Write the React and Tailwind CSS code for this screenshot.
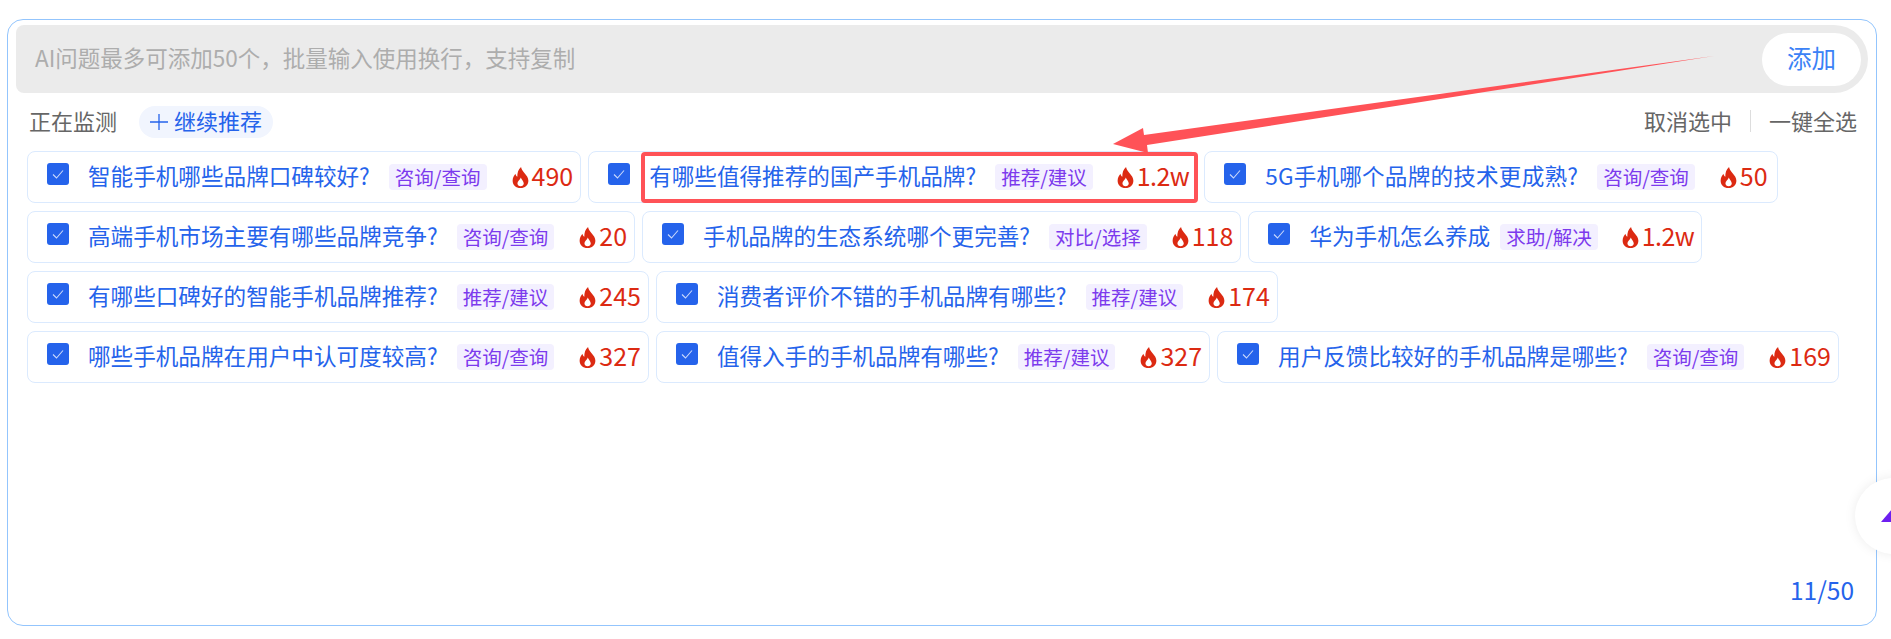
const rows = [
  [
    { text: '智能手机哪些品牌口碑较好?', tag: '咨询/查询', hot: '490' },
    { text: '有哪些值得推荐的国产手机品牌?', tag: '推荐/建议', hot: '1.2w' },
    { text: '5G手机哪个品牌的技术更成熟?', tag: '咨询/查询', hot: '50', wide: true },
  ],
  [
    { text: '高端手机市场主要有哪些品牌竞争?', tag: '咨询/查询', hot: '20' },
    { text: '手机品牌的生态系统哪个更完善?', tag: '对比/选择', hot: '118' },
    { text: '华为手机怎么养成', tag: '求助/解决', hot: '1.2w', noMark: true },
  ],
  [
    { text: '有哪些口碑好的智能手机品牌推荐?', tag: '推荐/建议', hot: '245' },
    { text: '消费者评价不错的手机品牌有哪些?', tag: '推荐/建议', hot: '174' },
  ],
  [
    { text: '哪些手机品牌在用户中认可度较高?', tag: '咨询/查询', hot: '327' },
    { text: '值得入手的手机品牌有哪些?', tag: '推荐/建议', hot: '327' },
    { text: '用户反馈比较好的手机品牌是哪些?', tag: '咨询/查询', hot: '169' },
  ],
]

function Flame() {
  return (
    <svg width="17" height="21" viewBox="0 0 15 20" className="shrink-0">
      <path
        fill="#dc2a12"
        fillRule="evenodd"
        d="M8 0c.6 2.800 2 4.300 3.600 6.200C13.400 8.300 15 10.300 15 13c0 4-3.200 7-7.500 7S0 17 0 13c0-2.700 1.300-4.700 2.700-6.500.2 1.300.8 2.200 1.800 2.800C4.300 5.500 5.400 2.300 8 0Zm-.3 10c-.3 1.400-1.100 2-2 3.100-.7.900-1.100 1.700-1.100 2.600 0 1.500 1.300 2.700 3 2.700s3-1.200 3-2.700c0-2.200-2-3.500-2.900-5.700Z"
      />
    </svg>
  )
}

function Item({ item }) {
  const isWan = item.hot.endsWith('w')
  return (
    <div className="flex h-[52px] items-center rounded-lg border border-[#dbeafe] bg-white pl-[19px] pr-[7px]">
      <span className="flex h-[22px] w-[22px] shrink-0 -translate-y-[3px] items-center justify-center rounded-[3px] bg-[#2563eb]">
        <svg width="14" height="14" viewBox="0 0 14 14" fill="none">
          <path d="M2 7.500 5.500 11 12 3.500" stroke="#c9d8fb" strokeWidth="1.100" />
        </svg>
      </span>
      <span className={`${item.wide ? 'tracking-[0.2px]' : ''} ml-[19px] whitespace-nowrap pb-[2px] text-[22.600px] text-[#2563eb]`}>{item.text}</span>
      <span className={`${item.noMark ? 'ml-[10px]' : 'ml-[19px]'} flex h-[26px] items-center whitespace-nowrap rounded-sm bg-[#f3f0ff] px-[6px] text-[19.500px] text-[#7c3aed]`}>{item.tag}</span>
      <span className={`${isWan ? 'pl-[24px] tracking-[-0.6px]' : 'pl-[25px]'} ${item.wide ? 'pr-[2px]' : ''} ml-auto flex items-center gap-[3px] text-[25px] text-[#dc2a12]`}>
        <Flame />
        <span className="pb-[2px]">{item.hot}</span>
      </span>
    </div>
  )
}

export default function App() {
  return (
    <div className="relative h-[639px] w-[1891px] overflow-hidden bg-white pt-[19px] pl-[7px] font-['Noto_Sans_CJK_SC',sans-serif]">
      <div className="flex h-[607px] w-[1870px] flex-col rounded-2xl border border-[#93c5fd] px-[8px] pt-[5px] pb-[16px]">
        <div className="flex h-[68px] items-center justify-between rounded-l-lg rounded-r-[34px] bg-[#ebebeb] pr-[7px] pl-[19px]">
          <span className="pb-[2px] text-[22.500px] text-[#adadad]">AI问题最多可添加50个，批量输入使用换行，支持复制</span>
          <button className="flex h-[53px] w-[99px] items-center justify-center rounded-[27px] bg-white pb-[2px] text-[24.500px] text-[#3b82f6]">添加</button>
        </div>

        <div className="mt-[11px] flex items-center justify-between pr-[11px] pl-[13px]">
          <div className="flex items-center gap-[22px]">
            <span className="pb-[2px] text-[22px] text-[#666666]">正在监测</span>
            <span className="flex h-[32px] items-center gap-[6px] rounded-full bg-[#f1f5fe] px-[11px] text-[22px] text-[#2563eb]">
              <svg width="18" height="18" viewBox="0 0 18 18" fill="none" stroke="#2563eb" strokeWidth="1.300">
                <path d="M0 9h18M9 1v16" />
              </svg>
              <span className="pb-[2px]">继续推荐</span>
            </span>
          </div>
          <div className="flex items-center pb-[2px] text-[22px] text-[#666666]">
            <span>取消选中</span>
            <span className="mx-[18px] h-[22px] w-px bg-[#dddddd]" />
            <span>一键全选</span>
          </div>
        </div>

        <div className="mt-[12px] flex flex-col gap-[8px] pl-[11px]">
          {rows.map((row, i) => (
            <div key={i} className="flex gap-[7px]">
              {row.map((item) => (
                <Item key={item.text} item={item} />
              ))}
            </div>
          ))}
        </div>

        <div className="mt-auto pr-[14px] text-right text-[24.500px] text-[#2563eb]">11/50</div>
      </div>

      {/* red markup drawn over the screenshot */}
      <div className="absolute top-[152px] left-[641px] h-[51px] w-[557px] rounded-sm border-[4px] border-[#ff5257]" />
      <svg width="1891" height="639" className="pointer-events-none absolute inset-0">
        <polygon fill="#ff5257" points="1714,56 1144,135 1143,128 1113,144 1148,153 1147,145" />
      </svg>

      {/* floating round button cut by the window edge */}
      <div className="absolute top-[478px] left-[1855px] h-[76px] w-[76px] rounded-full bg-white shadow-[0_0_12px_rgba(0,0,0,0.08)]">
        <svg width="12" height="14" viewBox="0 0 12 14" className="absolute top-[30px] left-[26px]">
          <polygon points="0,14 12,0 12,14" fill="#6d1ff0" />
        </svg>
      </div>
    </div>
  )
}
